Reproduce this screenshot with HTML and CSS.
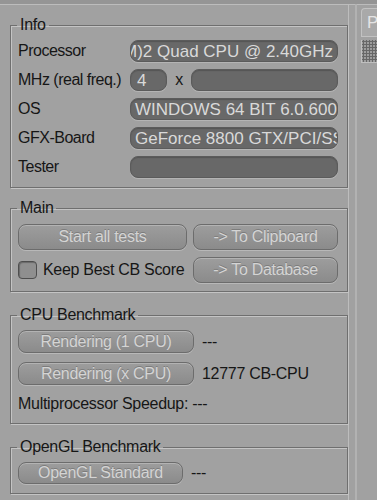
FILE: index.html
```html
<!DOCTYPE html>
<html>
  <head>
    <title>Cinebench</title>
    <link rel="stylesheet" href="styles.css">
  </head>
  <body>
    <div class="app">
      <div class="panel">
        <fieldset class="group info">
          <legend>Info</legend>
          <div class="row">
            <span class="label">Processor</span>
            <div class="field scrolled"><span>Intel(R) Core(TM)2 Quad CPU @ 2.40GHz</span></div>
          </div>
          <div class="row">
            <span class="label">MHz (real freq.)</span>
            <div class="field mhz">4</div>
            <span class="times">x</span>
            <div class="field"></div>
          </div>
          <div class="row">
            <span class="label">OS</span>
            <div class="field"><span>WINDOWS 64 BIT 6.0.6001</span></div>
          </div>
          <div class="row">
            <span class="label">GFX-Board</span>
            <div class="field"><span>GeForce 8800 GTX/PCI/SSE2</span></div>
          </div>
          <div class="row">
            <span class="label">Tester</span>
            <div class="field"></div>
          </div>
        </fieldset>

        <fieldset class="group main">
          <legend>Main</legend>
          <div class="btn-row">
            <button class="btn start">Start all tests</button>
            <button class="btn send">-&gt; To Clipboard</button>
          </div>
          <div class="btn-row">
            <label class="check"><span class="box"></span>Keep Best CB Score</label>
            <button class="btn send">-&gt; To Database</button>
          </div>
        </fieldset>

        <fieldset class="group cpu">
          <legend>CPU Benchmark</legend>
          <div class="bench-row">
            <button class="btn bench">Rendering (1 CPU)</button>
            <span class="result">---</span>
          </div>
          <div class="bench-row">
            <button class="btn bench">Rendering (x CPU)</button>
            <span class="result">12777 CB-CPU</span>
          </div>
          <div class="speedup">Multiprocessor Speedup: ---</div>
        </fieldset>

        <fieldset class="group gl">
          <legend>OpenGL Benchmark</legend>
          <div class="bench-row">
            <button class="btn bench gl-btn">OpenGL Standard</button>
            <span class="result">---</span>
          </div>
        </fieldset>
      </div>

      <div class="side">
        <div class="tab">P</div>
        <div class="grip"></div>
      </div>
    </div>
  </body>
</html>
```

FILE: styles.css
```css
body {
  margin: 0;
  background-color: #a1a1a1;
  font-family: "Liberation Sans", Arial, sans-serif;
  font-size: 16px;
  letter-spacing: -0.3px;
  color: #161616;
  overflow: hidden;
}

.app {
  display: flex;
  height: 500px;
  border-top: 4px solid #959595;
  box-shadow: inset 0 1px 0 #bcbcbc;
}

.panel {
  width: 338px;
  padding-left: 10px;
  border-right: 1px solid #bdbdbd;
}

.group {
  margin: 13px 0 0 0;
  padding: 0 9px 9px 7px;
  border: 1px solid #6f6f6f;
  box-shadow: 1px 1px 0 #c4c4c4, inset 1px 1px 0 #c4c4c4;
  min-width: 0;
}

.group legend {
  padding: 0 3px;
  line-height: 18px;
  margin-left: -1px;
}

/* info rows */
.info {
  margin-top: 12px;
  padding-top: 6px;
}

.row {
  display: flex;
  align-items: center;
  height: 22px;
  margin-bottom: 7px;
}

.row:last-child {
  margin-bottom: 0;
}

.label {
  width: 112px;
  flex-shrink: 0;
  white-space: nowrap;
  letter-spacing: -0.5px;
}

.field {
  flex: 1;
  min-width: 0;
  height: 22px;
  line-height: 22px;
  padding: 0 4px;
  background-color: #686868;
  border: 1px solid #5b5b5b;
  border-radius: 8px;
  box-shadow: 0 1px 0 #b4b4b4, inset 0 1px 1px #555;
  color: #d9d9d9;
  font-size: 17px;
  letter-spacing: 0;
  white-space: nowrap;
  overflow: hidden;
  box-sizing: border-box;
  display: flex;
}

.field.scrolled {
  justify-content: flex-end;
}

.field.mhz {
  flex: none;
  width: 37px;
  padding-left: 6px;
}

.times {
  width: 24px;
  text-align: center;
  flex-shrink: 0;
}

/* buttons */
.main {
  margin-top: 11px;
  padding-top: 7px;
  padding-bottom: 8px;
}

.btn-row {
  display: flex;
  justify-content: space-between;
  align-items: center;
  height: 26px;
  margin-bottom: 7px;
}

.btn-row:last-child {
  margin-bottom: 0;
}

.btn {
  height: 26px;
  padding: 0;
  font-family: inherit;
  font-size: 16px;
  letter-spacing: -0.3px;
  color: #d4d4d4;
  background: linear-gradient(#9d9d9d, #8b8b8b);
  border: 1px solid #6c6c6c;
  border-radius: 8px;
  box-shadow: inset 0 1px 0 #b3b3b3, 0 1px 0 #b8b8b8;
  text-shadow: 0 -1px 0 #7c7c7c;
}

.start {
  width: 169px;
}

.send {
  width: 145px;
}

.check {
  display: flex;
  align-items: center;
  white-space: nowrap;
}

.box {
  width: 17px;
  height: 16px;
  margin-right: 6px;
  border: 1px solid #4e4e4e;
  border-radius: 4px;
  background-color: #8f8f8f;
  box-shadow: inset 1px 1px 1px #6a6a6a;
}

.cpu {
  margin-top: 14px;
  padding-top: 6px;
  padding-bottom: 10px;
}

.bench-row {
  display: flex;
  align-items: center;
  margin-bottom: 9px;
}

.bench {
  width: 176px;
  height: 23px;
}

.result {
  margin-left: 8px;
}

.speedup {
  line-height: 18px;
  margin-top: 10px;
}

.gl {
  margin-top: 14px;
  padding-top: 6px;
}

.gl .bench-row {
  margin-bottom: 0;
}

.gl-btn {
  width: 165px;
  height: 22px;
}

/* right strip */
.side {
  flex: 1;
  margin-left: 6px;
  border-left: 2px solid #b2b2b2;
  padding: 4px 0 0 4px;
}

.tab {
  height: 27px;
  padding-left: 5px;
  background-color: #a9a9a9;
  border: 1px solid #c2c2c2;
  border-right: none;
  border-radius: 4px 0 0 0;
  color: #e4e4e4;
  font-size: 17px;
  line-height: 27px;
  overflow: hidden;
}

.grip {
  height: 22px;
  margin-top: 3px;
  border-left: 1px solid #c0c0c0;
  border-bottom: 1px solid #c0c0c0;
  background-color: #9d9d9d;
  background-image: radial-gradient(circle, #676767 1px, transparent 1.3px);
  background-size: 3px 3px;
}
```
